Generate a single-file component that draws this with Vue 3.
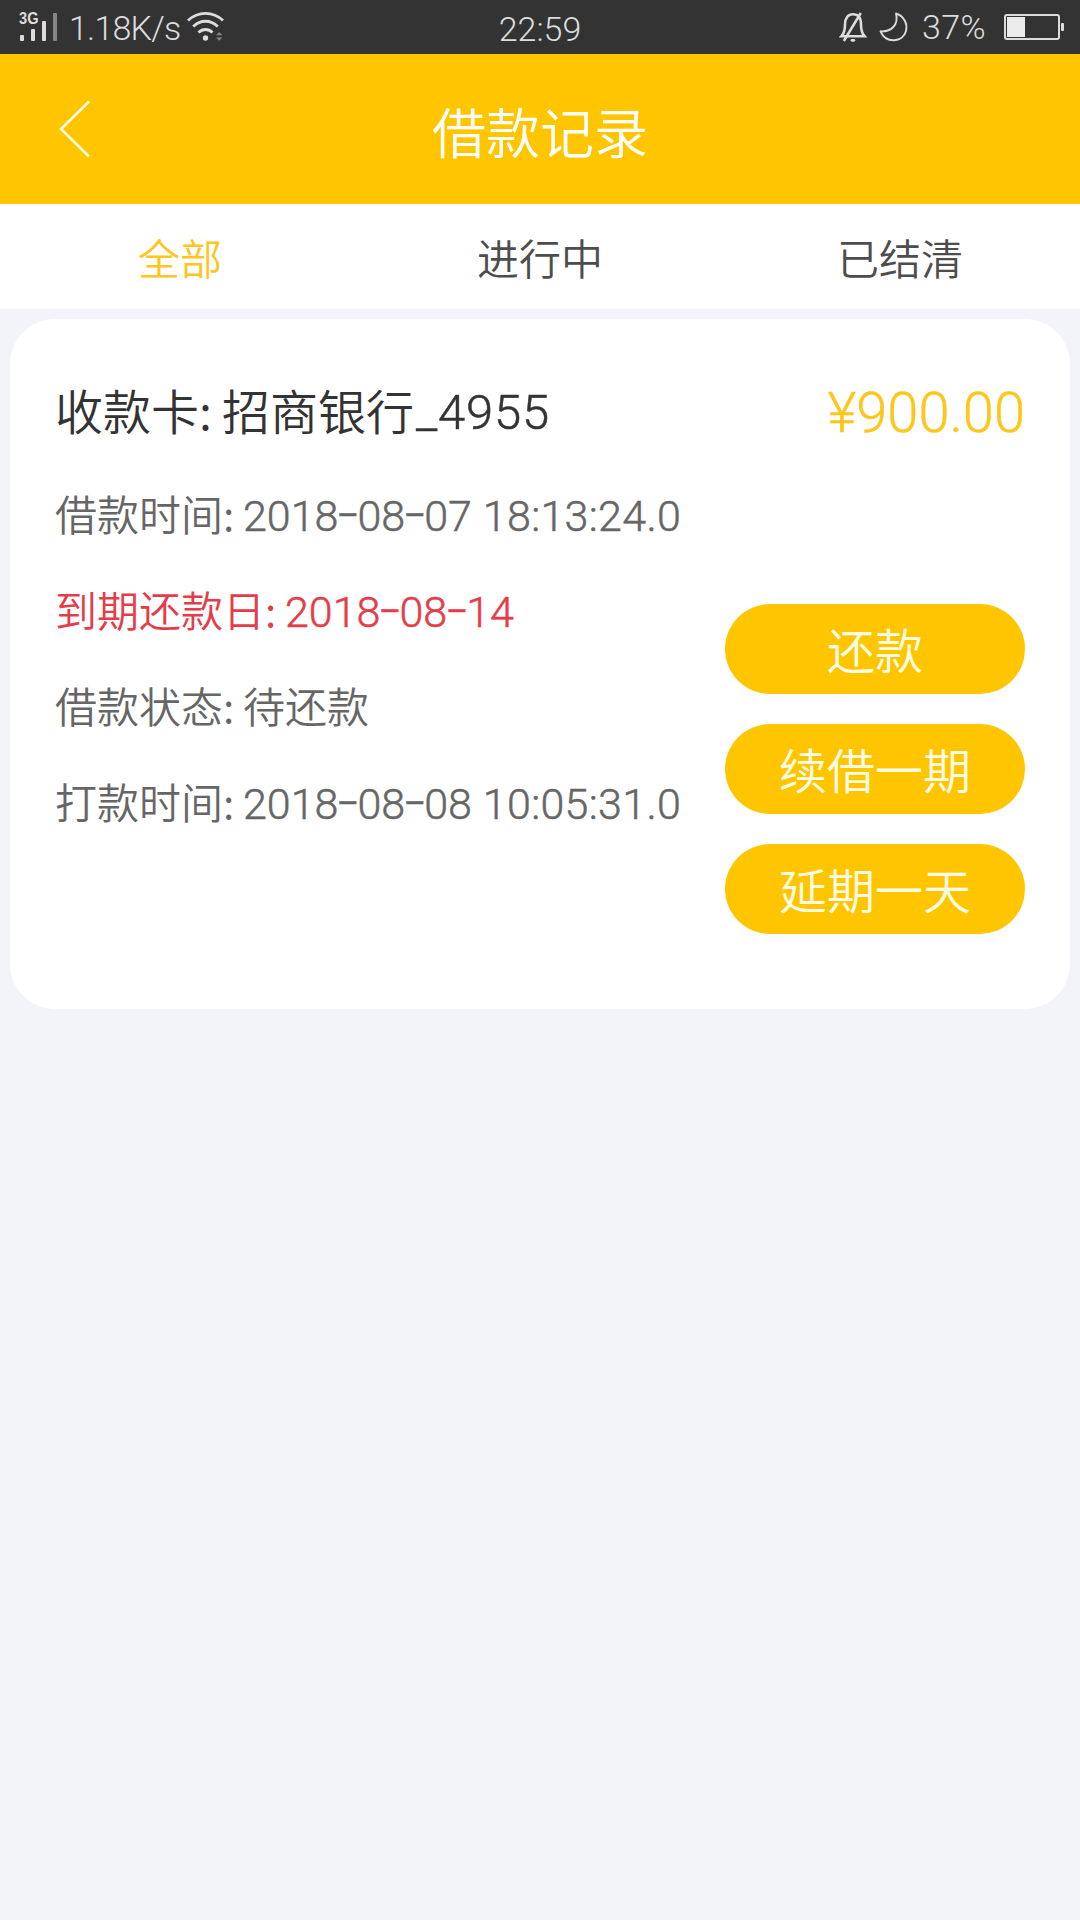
<script setup>
import { ref } from 'vue';

const tabs = ['全部', '进行中', '已结清'];
const activeTab = ref(0);

const record = {
    card: '_4955',
    bank: '招商银行',
    amount: '¥900.00',
};

const details = [
    { label: '借款时间', date: ['2018', '08', '07'], time: '18:13:24.0' },
    { label: '到期还款日', date: ['2018', '08', '14'], due: true },
    { label: '借款状态', text: '待还款' },
    { label: '打款时间', date: ['2018', '08', '08'], time: '10:05:31.0' },
];

const actions = ['还款', '续借一期', '延期一天'];
</script>

<template>
    <div class="page">
        <div class="status-bar">
            <div class="status-left">
                <svg class="signal" width="40" height="30" viewBox="0 0 40 30">
                    <text x="0" y="13" textLength="19.500" lengthAdjust="spacingAndGlyphs" class="network">3G</text>
                    <rect x="1" y="24" width="4" height="6" rx="1" fill="#dcdcdc" />
                    <rect x="12" y="18" width="4" height="12" rx="1" fill="#dcdcdc" />
                    <rect x="23" y="10" width="4" height="20" rx="1" fill="#dcdcdc" />
                    <rect x="34" y="2" width="4" height="28" rx="1" fill="#858585" />
                </svg>
                <span class="speed">1.18K/s</span>
                <svg class="wifi" width="37" height="30" viewBox="0 0 37 30">
                    <g fill="none" stroke="#dcdcdc" stroke-width="2.8">
                        <path d="M1 9.5C11 0 26 0 36 9.5" />
                        <path d="M6.2 15.5C13.5 8.5 23.5 8.5 30.8 15.5" />
                        <path d="M11.5 21.5C15.5 17.5 21.5 17.5 25.5 21.5" />
                    </g>
                    <circle cx="18.5" cy="27" r="2.7" fill="#dcdcdc" />
                    <path d="M29 24.3l3.2-3.3 3.2 3.3zM29 26.4h6.4l-3.2 3.3z" fill="#858585" />
                </svg>
            </div>
            <div class="clock">22:59</div>
            <div class="status-right">
                <svg class="bell" width="28" height="30" viewBox="0 0 28 30">
                    <path d="M2.500 24.200C5 21.500 6 18 6 12.500C6 6 9 2.300 14 2.300S22 6 22 12.500C22 18 23 21.500 25.500 24.200z" fill="none" stroke="#dcdcdc" stroke-width="2.600" />
                    <path d="M4.800 29L21.800 1" stroke="#dcdcdc" stroke-width="2.500" />
                    <path d="M13 28.300h1.800" stroke="#dcdcdc" stroke-width="2.800" stroke-linecap="round" />
                </svg>
                <svg class="moon" width="30" height="30" viewBox="0 0 30 30">
                    <path d="M17 1.500C25 4 28.800 12 27 19C24 30.500 7 32 1.500 19.300C12 20 20 13 17 1.500z" fill="none" stroke="#dcdcdc" stroke-width="1.900" stroke-linejoin="round" />
                </svg>
                <span class="percent">37%</span>
                <svg class="battery" width="60" height="26" viewBox="0 0 60 26">
                    <rect x="1" y="1" width="54" height="24" rx="2" fill="none" stroke="#dcdcdc" stroke-width="2" />
                    <rect x="3" y="3" width="18" height="20" fill="#ececec" />
                    <rect x="57" y="9" width="3" height="8" rx="1" fill="#dcdcdc" />
                </svg>
            </div>
        </div>

        <header class="header">
            <svg class="back" width="32" height="58" viewBox="0 0 32 58">
                <path d="M30 1.500L2 29L30 56.500" fill="none" stroke="#fffbe0" stroke-width="2.600" />
            </svg>
            <h1>借款记录</h1>
        </header>

        <nav class="tabs">
            <div
                v-for="(tab, index) in tabs"
                :key="tab"
                class="tab"
                :class="{ active: activeTab === index }"
                @click="activeTab = index"
            >{{ tab }}</div>
        </nav>

        <section class="card">
            <div class="card-head">
                <div class="bank">收款卡<i>:</i>{{ record.bank }}<span class="digits">{{ record.card }}</span></div>
                <div class="amount">{{ record.amount }}</div>
            </div>
            <div class="card-body">
                <div class="details">
                    <div v-for="item in details" :key="item.label" class="row" :class="{ due: item.due }">
                        <span>{{ item.label }}</span><i>:</i>
                        <span v-if="item.date" class="number">
                            <template v-for="(part, index) in item.date" :key="index"><b v-if="index">-</b>{{ part }}</template>
                        </span>
                        <span v-if="item.time" class="number time">{{ item.time }}</span>
                        <span v-if="item.text">{{ item.text }}</span>
                    </div>
                </div>
                <div class="actions">
                    <button v-for="action in actions" :key="action">{{ action }}</button>
                </div>
            </div>
        </section>
    </div>
</template>

<style>
body {
    background: #f3f4fa;
}
</style>

<style scoped>
.page {
    width: 1080px;
    height: 1920px;
    overflow: hidden;
    background: #f3f4fa;
    font-family: "Noto Sans CJK SC", sans-serif;
    font-weight: 350;
}

.status-bar {
    display: grid;
    grid-template-columns: 1fr auto 1fr;
    height: 54px;
    background: #333;
    color: #dcdcdc;
    font-family: Roboto, sans-serif;
    font-size: 34px;
    font-weight: 300;
    line-height: 54px;
}

.status-left,
.status-right {
    display: flex;
    align-items: flex-start;
}

.status-left {
    padding-left: 19px;
}

.status-right {
    justify-content: flex-end;
    padding-right: 16px;
}

.signal {
    margin-top: 11px;
}

.network {
    fill: #dcdcdc;
    font: 700 16px "Liberation Sans", sans-serif;
}

.speed {
    width: 116px;
    padding-left: 10px;
    padding-top: 1px;
    box-sizing: border-box;
    letter-spacing: -0.8px;
}

.wifi {
    margin-top: 11px;
    margin-left: 12px;
}

.clock {
    padding-top: 2px;
}

.bell {
    margin-top: 12px;
}

.moon {
    margin-top: 12px;
    margin-left: 12px;
}

.percent {
    margin-left: 13px;
    width: 82px;
    letter-spacing: 0.4px;
}

.battery {
    margin-top: 14px;
}

.header {
    display: grid;
    grid-template-columns: 1fr auto 1fr;
    align-items: center;
    height: 150px;
    background: #ffc600;
}

.back {
    margin-left: 59px;
}

h1 {
    margin: 0;
    padding-top: 3px;
    color: #fff;
    font-size: 54px;
    font-weight: 350;
    line-height: 80px;
}

.tabs {
    display: grid;
    grid-template-columns: repeat(3, 1fr);
    height: 105px;
    background: #fff;
}

.tab {
    color: #4d4d4d;
    font-size: 42px;
    line-height: 105px;
    text-align: center;
}

.tab.active {
    color: #fcc61c;
}

.card {
    box-sizing: border-box;
    height: 690px;
    margin: 10px 10px 0;
    padding: 44px 45px 0;
    border-radius: 45px;
    background: #fff;
}

.card-head {
    display: flex;
    justify-content: space-between;
    height: 102px;
    line-height: 92px;
}

.card i {
    flex: none;
    display: inline-block;
    width: 20px;
    font-style: normal;
}

.bank {
    color: #333;
    font-size: 48px;
    white-space: nowrap;
}

.card .bank i {
    width: 23px;
}

.bank .digits {
    padding-left: 2px;
    font-family: Roboto, sans-serif;
    font-size: 49px;
    letter-spacing: 0.8px;
    line-height: 1;
    vertical-align: 1px;
    -webkit-text-stroke: 0.5px currentColor;
}

.amount {
    padding-top: 4px;
    color: #fcc61c;
    font-family: Roboto, sans-serif;
    font-size: 56px;
    -webkit-text-stroke: 0.4px currentColor;
}

.card-body {
    display: flex;
    justify-content: space-between;
}

.row {
    display: flex;
    align-items: baseline;
    height: 96px;
    color: #666;
    font-size: 42px;
    line-height: 96px;
    white-space: nowrap;
}

.row.due {
    color: #e43c49;
}

.number {
    font-family: Roboto, sans-serif;
    font-size: 43px;
    line-height: 1;
    -webkit-text-stroke: 0.5px currentColor;
}

/* wide, slightly raised dash between the date parts */
.number b {
    display: inline-block;
    width: 19px;
    font-family: Inter, sans-serif;
    font-weight: 300;
    line-height: 1;
    text-align: center;
    vertical-align: 3px;
    transform: scaleX(1.25);
}

.number.time {
    margin-left: 11px;
    letter-spacing: 0.3px;
}

.actions {
    display: flex;
    flex-direction: column;
    gap: 30px;
    padding-top: 139px;
}

button {
    width: 300px;
    height: 90px;
    padding: 0 0 1px;
    border: 0;
    border-radius: 45px;
    background: #ffc600;
    color: #fffde8;
    font: inherit;
    font-size: 48px;
    line-height: 89px;
}
</style>
